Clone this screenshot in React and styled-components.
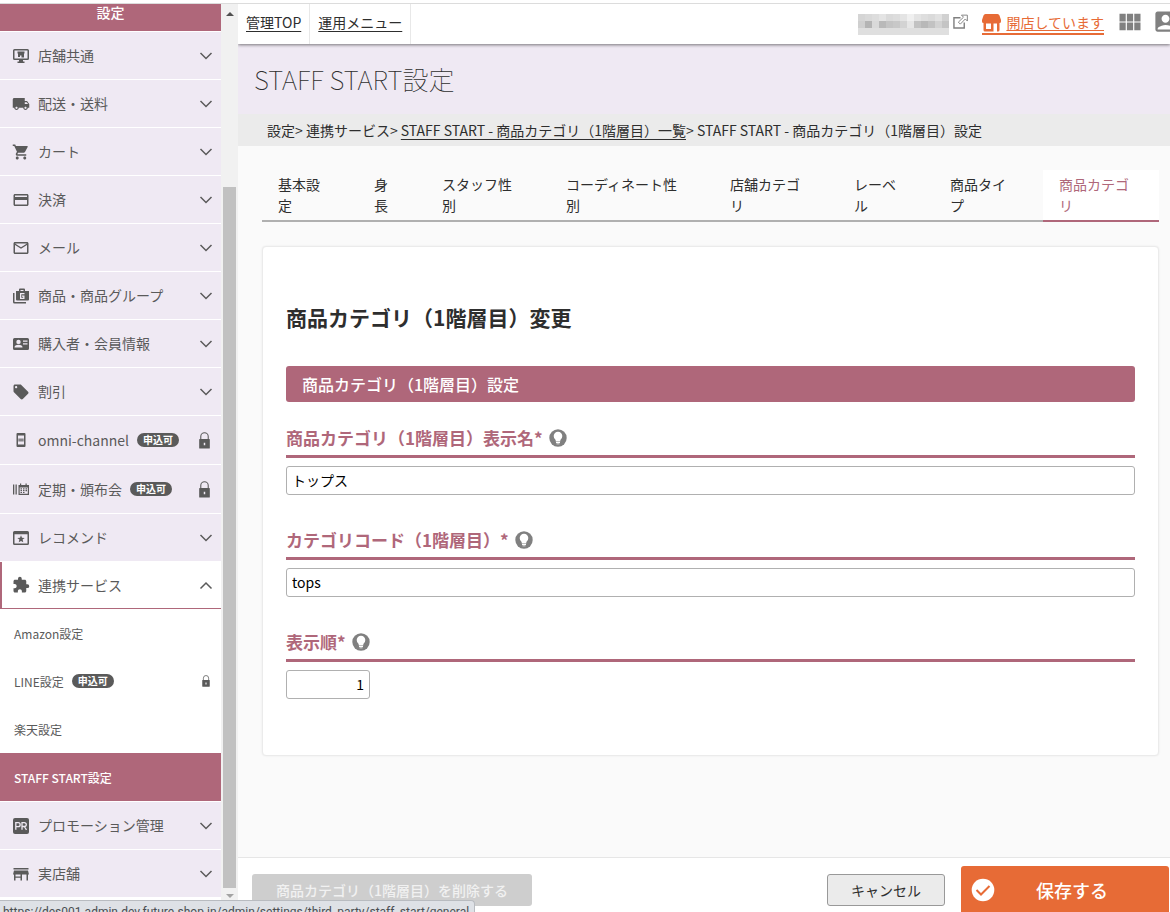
import React from "react";

import styled, { createGlobalStyle, css } from "styled-components";
import {
  MdAccountBox,
  MdCreditCard,
  MdExtension,
  MdLocalOffer,
  MdLocalShipping,
  MdMailOutline,
  MdShoppingCart,
  MdViewModule
} from "react-icons/md";

const accent = "#af677a";
const orange = "#e76b36";
const lavender = "#efe9f3";

const GlobalStyle = createGlobalStyle`
  * {
    box-sizing: border-box;
  }
  body {
    margin: 0;
    background: #fafafa;
    color: #2e2e2e;
    font-family: "Noto Sans CJK JP", sans-serif;
    font-size: 14px;
    line-height: 21px;
  }
  button, input {
    font: inherit;
  }
`;

const Page = styled.div`
  display: flex;
  position: relative;
  height: 100vh;
  border-top: 3px solid #ffffff;
  overflow: hidden;
`;

const Sidebar = styled.aside`
  display: flex;
  flex: none;
  position: relative;
  z-index: 1;
  width: 238px;
  border-top: 1px solid #dcdcdc;
  background: #ffffff;
`;

const Menu = styled.nav`
  flex: 1;
  min-width: 0;
`;

const MenuTitle = styled.h2`
  margin: 0;
  height: 28px;
  border-bottom: 1px solid #ffffff;
  background: ${accent};
  color: #ffffff;
  font-size: 14px;
  font-weight: 500;
  line-height: 16px;
  text-align: center;
`;

const MenuList = styled.ul`
  margin: 0;
  padding: 0;
  list-style: none;
`;

const MenuLink = styled.a`
  display: flex;
  align-items: center;
  height: ${props => (props.$locked ? "49px" : "48px")};
  padding: 0 8px 0 12px;
  border-bottom: 1px solid #ffffff;
  background: ${lavender};
  color: #5a5a5a;
  text-decoration: none;
  ${props =>
    props.$open &&
    css`
      height: 47px;
      padding-left: 10px;
      border-left: 2px solid ${accent};
      border-bottom-color: ${accent};
      background: #ffffff;
    `}
`;

const MenuIcon = styled.span`
  display: flex;
  align-items: center;
  justify-content: center;
  width: 18px;
  height: 18px;
  margin-right: 8px;
  font-size: 18px;
`;

const SubLink = styled.a`
  display: flex;
  align-items: center;
  height: 48px;
  padding: 0 9px 0 14px;
  background: ${props => (props.$active ? accent : "#ffffff")};
  color: ${props => (props.$active ? "#ffffff" : "#5a5a5a")};
  font-size: 12px;
  font-weight: ${props => (props.$active ? 500 : 400)};
  text-decoration: none;
`;

const SubList = styled(MenuList)`
  border-bottom: 1px solid #ffffff;
`;

const Badge = styled.span`
  margin-left: 8px;
  width: 42px;
  height: 14px;
  border-radius: 7px;
  background: #5a5a5a;
  color: #ffffff;
  font-size: 10px;
  font-weight: 700;
  line-height: 14px;
  text-align: center;
`;

const MenuMark = styled.span`
  display: flex;
  margin-left: auto;
`;

const ScrollTrack = styled.div`
  display: flex;
  flex-direction: column;
  align-items: center;
  flex: none;
  width: 17px;
  padding: 8px 2px 14px;
  background: #f1f1f1;
`;

const ScrollThumb = styled.div`
  flex: 1;
  width: 13px;
  margin: 171px 0 6px;
  background: #c1c1c1;
`;

const Arrow = styled.div`
  border: 4px solid transparent;
  border-top-width: ${props => (props.$down ? "4px" : 0)};
  border-bottom-width: ${props => (props.$down ? 0 : "4px")};
  border-top-color: ${props => (props.$down ? "#a3a3a3" : "transparent")};
  border-bottom-color: ${props => (props.$down ? "transparent" : "#505050")};
`;

const Main = styled.div`
  display: flex;
  flex-direction: column;
  flex: 1;
  min-width: 0;
`;

const TopBar = styled.header`
  display: flex;
  flex: none;
  position: relative;
  height: 41px;
  border-top: 1px solid #dcdcdc;
  background: #ffffff;
  box-shadow: 0 1px 3px rgba(0, 0, 0, 0.5);
`;

const TopLink = styled.a`
  padding: 8px;
  border-right: 1px solid #e8e8e8;
  color: #2e2e2e;
  text-underline-offset: 3px;
`;

const TopTools = styled.div`
  display: flex;
  align-items: flex-start;
  margin-left: auto;
  padding-top: 4px;
`;

const ShopName = styled.a`
  display: flex;
  align-items: flex-start;
  gap: 4px;
  margin: 6px 14px 0 0;
  color: #808080;
`;

const ShopStatus = styled.a`
  display: flex;
  align-items: center;
  gap: 5px;
  height: 23px;
  margin-top: 4px;
  border-bottom: 2px solid ${orange};
  color: ${orange};
  text-underline-offset: 2px;
`;

const IconButton = styled.button`
  display: flex;
  margin: 0 0 0 12px;
  padding: 0;
  border: 0;
  background: none;
  color: #808080;
  overflow: hidden;
  & svg {
    flex: none;
  }
`;

const AccountButton = styled(IconButton)`
  width: 18px;
  margin-left: 8px;
`;

const PageTitle = styled.h1`
  margin: 0;
  padding: 17px 16px 17px;
  background: ${lavender};
  font-size: 26px;
  font-weight: 100;
  line-height: 36px;
`;

const Breadcrumb = styled.nav`
  padding: 6px 29px 5px;
  background: #ebebeb;
  white-space: nowrap;
  & a {
    color: inherit;
    text-underline-offset: 3px;
  }
`;

const Content = styled.main`
  flex: 1;
  padding: 24px 11px 0 24px;
`;

const Tabs = styled.nav`
  display: grid;
  grid-template-columns: 80fr 52fr 108fr 148fr 108fr 80fr 93fr 116fr;
  gap: 16px;
  border-bottom: 2px solid #b0b0b0;
`;

const Tab = styled.a`
  min-width: 0;
  margin-bottom: -2px;
  padding: 4px 18px 4px 16px;
  border-bottom: 2px solid transparent;
  color: #2e2e2e;
  text-decoration: none;
  word-break: break-all;
  ${props =>
    props.$active &&
    css`
      border-color: ${accent};
      background: #ffffff;
      color: ${accent};
    `}
`;

const Card = styled.form`
  margin-top: 24px;
  padding: 55px 23px 56px;
  border: 1px solid #ebebeb;
  border-radius: 4px;
  background: #ffffff;
  box-shadow: 0 0 2px rgba(0, 0, 0, 0.08);
`;

const CardTitle = styled.h2`
  margin: 0 0 33px;
  font-size: 21px;
  font-weight: 700;
  line-height: 31px;
`;

const Band = styled.h3`
  margin: 0 0 24px;
  padding: 0 16px;
  border-radius: 3px;
  background: ${accent};
  color: #ffffff;
  font-size: 16px;
  font-weight: 500;
  line-height: 36px;
`;

const Field = styled.div`
  & + & {
    margin-top: 33px;
  }
`;

const FieldHead = styled.div`
  display: flex;
  align-items: center;
  gap: 6px;
  margin-bottom: 8px;
  padding-bottom: 5px;
  border-bottom: 3px solid ${accent};
`;

const Label = styled.label`
  color: ${accent};
  font-size: 17px;
  font-weight: 700;
  line-height: 24px;
`;

const HelpButton = styled(IconButton)`
  margin: 0;
`;

const TextInput = styled.input`
  display: block;
  width: ${props => (props.$short ? "84px" : "100%")};
  height: 29px;
  padding: 0 5px 1px;
  border: 1px solid #b0b0b0;
  border-radius: 3px;
  background: #ffffff;
  color: #000000;
  text-align: ${props => (props.$short ? "right" : "left")};
`;

const Footer = styled.footer`
  display: flex;
  align-items: flex-start;
  flex: none;
  height: 55px;
  padding: 8px 1px 0 14px;
  border-top: 1px solid #e6e6e6;
  background: #ffffff;
  overflow: hidden;
`;

const Button = styled.button`
  height: 32px;
  margin-top: 8px;
  padding: 0 23px;
  border: 1px solid #999999;
  border-radius: 3px;
  background: #ebebeb;
  color: #2e2e2e;
`;

const DeleteButton = styled(Button)`
  padding: 0 24px;
  border: 0;
  background: #cecece;
  color: #f1f1f1;
  font-weight: 500;
  margin-right: auto;
`;

const SaveButton = styled.button`
  display: flex;
  align-items: center;
  flex: none;
  width: 208px;
  height: 48px;
  margin-left: 16px;
  padding: 0 20px 0 10px;
  border: 0;
  border-radius: 3px;
  background: ${orange};
  color: #ffffff;
  font-size: 18px;
  font-weight: 500;
`;

const SaveText = styled.span`
  flex: 1;
`;

const StatusBar = styled.div`
  position: absolute;
  left: 0;
  bottom: 0;
  z-index: 2;
  height: 12px;
  padding: 3px 5px 0 3px;
  border: solid #b8bbc0;
  border-width: 1px 1px 0 0;
  border-radius: 0 4px 0 0;
  background: #dee1e6;
  color: #4a4d51;
  font-family: Roboto, sans-serif;
  font-size: 12px;
  line-height: 16px;
  overflow: hidden;
`;

const Svg = ({ size = 16, children, ...remaining }) => (
  <svg
    width={size}
    height={size}
    viewBox="0 0 16 16"
    fill="currentColor"
    aria-hidden="true"
    {...remaining}
  >
    {children}
  </svg>
);

const MonitorIcon = () => (
  <Svg>
    <path
      fillRule="evenodd"
      d="M1.500 1h13A1.500 1.500 0 0 1 16 2.500v8a1.500 1.500 0 0 1-1.500 1.500H10v1.500h1.500V15h-7v-1.500H6V12H1.500A1.500 1.500 0 0 1 0 10.500v-8A1.500 1.500 0 0 1 1.500 1zM1.500 2.500v8h13v-8z"
    />
    <path d="M4.500 3.500h7v2H11v4H8.500V7.500H7v1.500H5V5.500h-.5z" />
  </Svg>
);

const BagIcon = () => (
  <Svg>
    <path d="M0 5h1.500v9H13v1.500H1.500A1.500 1.500 0 0 1 0 14z" />
    <path
      fillRule="evenodd"
      d="M3 3h3V1.500Q6 .5 7 .5h4q1 0 1 1V3h4v8.500q0 1-1 1H4q-1 0-1-1zM7.500 2v1h3V2zM7 5v6h4.500V7.500H9v1.200h1.200v1H8.300V6.300h3.200V5z"
    />
  </Svg>
);

const MemberIcon = () => (
  <Svg>
    <path
      fillRule="evenodd"
      d="M1.500 2h13Q16 2 16 3.500v9q0 1.500-1.500 1.500h-13Q0 14 0 12.500v-9Q0 2 1.500 2zM5.500 3.700a2.200 2.200 0 1 0 0 4.400 2.200 2.200 0 0 0 0-4.400zM1.500 11.500h8q0-2.700-4-2.700t-4 2.700zM10 4.500v1.200h4.500V4.500zM10 7.200v1.200h4.500V7.200z"
    />
  </Svg>
);

const PhoneIcon = () => (
  <Svg>
    <path
      fillRule="evenodd"
      d="M4.500 1h7q1 0 1 1v12q0 1-1 1h-7q-1 0-1-1V2q0-1 1-1zM5 3.500v9h6v-9z"
    />
    <path d="M5.500 6.500h1.200v3H5.500zM7.300 6.500h1.400v3H7.300zM9.300 6.500h1.200v3H9.300z" />
  </Svg>
);

const CalendarIcon = () => (
  <Svg>
    <path d="M0 3.500h1.300v10H0zM2.500 3.500h1.300v10H2.500z" />
    <path
      fillRule="evenodd"
      d="M5.500 4H7V2.500h1.200V4h4.300V2.500h1.200V4H16v10H5.500zM6.700 6.500v6.300h8.100V6.500z"
    />
    <path d="M7.500 7.200H9v1.300H7.500zM10 7.200h1.500v1.300H10zM12.500 7.200H14v1.300h-1.500zM7.500 9h1.500v1.300H7.500zM10 9h1.500v1.300H10zM12.500 9H14v1.300h-1.500zM7.500 10.900H9v1.200H7.500zM10 10.900h1.500v1.200H10z" />
  </Svg>
);

const StarIcon = () => (
  <Svg>
    <path
      fillRule="evenodd"
      d="M1.500 1h13Q16 1 16 2.500v11q0 1.500-1.500 1.500h-13Q0 15 0 13.500v-11Q0 1 1.500 1zM1.500 4.200v9.300h13V4.200z"
    />
    <path d="M8 5.200l1 2.500 2.700.2-2.100 1.700.7 2.700L8 10.900l-2.300 1.400.7-2.700-2.100-1.700L7 7.700z" />
  </Svg>
);

const PromotionIcon = () => (
  <Svg>
    <rect width="16" height="16" rx="2" />
    <g fill="none" stroke={lavender} strokeWidth="1.300">
      <path d="M2.800 11.800V4.700h2.400a1.900 1.900 0 0 1 0 3.900H2.800" />
      <path d="M9 11.800V4.700h2.400a1.900 1.900 0 0 1 0 3.800H9M11.300 8.500l2.200 3.300" />
    </g>
  </Svg>
);

const RealStoreIcon = () => (
  <Svg>
    <path d="M.5 2h15v1.500H.5zM1 4.500h14l1 4H0z" />
    <path d="M1 8h1.500v6.500H1zM7.500 8H9v6.500H7.500zM13.500 8H15v6.500h-1.500zM1 10.500h7.500v1.200H1z" />
  </Svg>
);

const ShopIcon = () => (
  <svg width="19" height="18" viewBox="0 0 19 18" fill="currentColor" aria-hidden="true">
    <path
      fillRule="evenodd"
      d="M3.500 0h12q1.500 0 2 1.500L19 6v1.500Q19 9 17.500 9v7q0 1.500-1.500 1.500H3Q1.500 17.500 1.500 16V9Q0 9 0 7.500V6l1.500-4.500Q2 0 3.500 0zM4 9.500V15h5V9.500zM11.500 9.500V17.500H15V9.500z"
    />
  </svg>
);

const ExternalIcon = () => (
  <Svg size={15}>
    <path d="M8 4H1v11h11V9" fill="none" stroke="currentColor" strokeWidth="1.500" />
    <path d="M9 1.200h6.300v6.300l-2.200-2.200-5.300 5.500-2.100-2.100 5.500-5.300z" fill="#fff" stroke="currentColor" />
  </Svg>
);

const LockIcon = ({ size }) => (
  <Svg size={size}>
    <path d="M4.500 7V4.200a3.500 3.500 0 0 1 7 0V7" fill="none" stroke="currentColor" />
    <path
      fillRule="evenodd"
      d="M3.500 6.500h9q.5 0 .5.500v8q0 .5-.5.500h-9q-.5 0-.5-.500V7q0-.5.500-.500zM7.300 10v2.500h1.400V10z"
    />
  </Svg>
);

const ChevronIcon = ({ up }) => (
  <svg
    width="14"
    height="9"
    viewBox="0 0 14 9"
    fill="none"
    stroke="#5a5a5a"
    strokeWidth="1.500"
    aria-hidden="true"
  >
    <path d={up ? "M1.500 7.500L7 2l5.500 5.500" : "M1.500 2L7 7.500l5.500-5.500"} />
  </svg>
);

const BulbIcon = () => (
  <svg width="18" height="18" viewBox="0 0 18 18" aria-hidden="true">
    <circle cx="9" cy="9" r="8.700" fill="#808080" />
    <path
      fill="#fff"
      d="M9 2.700a4.300 4.300 0 0 0-4.300 4.300q0 2 1.600 3.500.5.600.5 1.900h4.400q0-1.300.5-1.900 1.600-1.500 1.600-3.500A4.300 4.300 0 0 0 9 2.700zM7 13h4v.9H7zM7.500 14.500h3v.8h-3z"
    />
  </svg>
);

const CheckIcon = () => (
  <svg width="24" height="24" viewBox="0 0 24 24" aria-hidden="true">
    <circle cx="12" cy="12" r="11.300" fill="#fff" />
    <path d="M5.500 12l4.500 4.500L18.500 8" fill="none" stroke={orange} strokeWidth="2" />
  </svg>
);

const mosaic = [
  "d5d9dde4dadde4f0e4dedae1d1".match(/../g),
  "cfb4d9b9c4c8d3e6c2b8c2d2c4".match(/../g),
  "dfdfdfdfdfdfdfdfdfdfdfdfdf".match(/../g)
];

const MaskedName = () => (
  <svg width="91" height="21" viewBox="0 0 91 21" shapeRendering="crispEdges" aria-hidden="true">
    {mosaic.map((row, y) =>
      row.map((tone, x) => (
        <rect
          key={`${x}-${y}`}
          x={x * 7}
          y={y * 7}
          width="7"
          height="7"
          fill={`#${tone}${tone}${tone}`}
        />
      ))
    )}
  </svg>
);

const upperMenu = [
  { label: "店舗共通", Icon: MonitorIcon },
  { label: "配送・送料", Icon: MdLocalShipping },
  { label: "カート", Icon: MdShoppingCart },
  { label: "決済", Icon: MdCreditCard },
  { label: "メール", Icon: MdMailOutline },
  { label: "商品・商品グループ", Icon: BagIcon },
  { label: "購入者・会員情報", Icon: MemberIcon },
  { label: "割引", Icon: MdLocalOffer },
  { label: "omni-channel", Icon: PhoneIcon, locked: true },
  { label: "定期・頒布会", Icon: CalendarIcon, locked: true },
  { label: "レコメンド", Icon: StarIcon },
  { label: "連携サービス", Icon: MdExtension, open: true }
];

const subMenu = [
  { label: "Amazon設定" },
  { label: "LINE設定", locked: true },
  { label: "楽天設定" },
  { label: "STAFF START設定", active: true }
];

const lowerMenu = [
  { label: "プロモーション管理", Icon: PromotionIcon },
  { label: "実店舗", Icon: RealStoreIcon }
];

const tabs = [
  { label: "基本設定" },
  { label: "身長" },
  { label: "スタッフ性別" },
  { label: "コーディネート性別" },
  { label: "店舗カテゴリ" },
  { label: "レーベル" },
  { label: "商品タイプ" },
  { label: "商品カテゴリ", active: true }
];

const fields = [
  { id: "name", label: "商品カテゴリ（1階層目）表示名*", value: "トップス" },
  { id: "code", label: "カテゴリコード（1階層目）*", value: "tops" },
  { id: "order", label: "表示順*", value: "1", short: true }
];

const MenuItem = ({ label, Icon, locked, open }) => (
  <li>
    <MenuLink href="#" $locked={locked} $open={open}>
      <MenuIcon>
        <Icon />
      </MenuIcon>
      {label}
      {locked && <Badge>申込可</Badge>}
      <MenuMark>{locked ? <LockIcon size={17} /> : <ChevronIcon up={open} />}</MenuMark>
    </MenuLink>
  </li>
);

const SubItem = ({ label, locked, active }) => (
  <li>
    <SubLink href="#" $active={active}>
      {label}
      {locked && (
        <>
          <Badge>申込可</Badge>
          <MenuMark>
            <LockIcon size={12} />
          </MenuMark>
        </>
      )}
    </SubLink>
  </li>
);

const App = () => (
  <Page>
    <GlobalStyle />
    <Sidebar>
      <Menu>
        <MenuTitle>設定</MenuTitle>
        <MenuList>
          {upperMenu.map(item => (
            <MenuItem key={item.label} {...item} />
          ))}
        </MenuList>
        <SubList>
          {subMenu.map(item => (
            <SubItem key={item.label} {...item} />
          ))}
        </SubList>
        <MenuList>
          {lowerMenu.map(item => (
            <MenuItem key={item.label} {...item} />
          ))}
        </MenuList>
      </Menu>
      <ScrollTrack>
        <Arrow />
        <ScrollThumb />
        <Arrow $down />
      </ScrollTrack>
    </Sidebar>
    <Main>
      <TopBar>
        <TopLink href="#">管理TOP</TopLink>
        <TopLink href="#">運用メニュー</TopLink>
        <TopTools>
          <ShopName href="#" aria-label="ショップ">
            <MaskedName />
            <ExternalIcon />
          </ShopName>
          <ShopStatus href="#">
            <ShopIcon />
            開店しています
          </ShopStatus>
          <IconButton type="button" aria-label="アプリ">
            <MdViewModule size={28} />
          </IconButton>
          <AccountButton type="button" aria-label="アカウント">
            <MdAccountBox size={27} />
          </AccountButton>
        </TopTools>
      </TopBar>
      <PageTitle>STAFF START設定</PageTitle>
      <Breadcrumb>
        設定&gt; 連携サービス&gt; <a href="#">STAFF START - 商品カテゴリ（1階層目）一覧</a>
        &gt; STAFF START - 商品カテゴリ（1階層目）設定
      </Breadcrumb>
      <Content>
        <Tabs>
          {tabs.map(({ label, active }) => (
            <Tab key={label} href="#" $active={active}>
              {label}
            </Tab>
          ))}
        </Tabs>
        <Card>
          <CardTitle>商品カテゴリ（1階層目）変更</CardTitle>
          <Band>商品カテゴリ（1階層目）設定</Band>
          {fields.map(({ id, label, value, short }) => (
            <Field key={id}>
              <FieldHead>
                <Label htmlFor={id}>{label}</Label>
                <HelpButton type="button" aria-label="ヘルプ">
                  <BulbIcon />
                </HelpButton>
              </FieldHead>
              <TextInput id={id} type="text" defaultValue={value} $short={short} />
            </Field>
          ))}
        </Card>
      </Content>
      <Footer>
        <DeleteButton type="button">商品カテゴリ（1階層目）を削除する</DeleteButton>
        <Button type="button">キャンセル</Button>
        <SaveButton type="submit">
          <CheckIcon />
          <SaveText>保存する</SaveText>
        </SaveButton>
      </Footer>
    </Main>
    <StatusBar>
      https://des001.admin.dev.future-shop.in/admin/settings/third_party/staff_start/general
    </StatusBar>
  </Page>
);

export default App;
